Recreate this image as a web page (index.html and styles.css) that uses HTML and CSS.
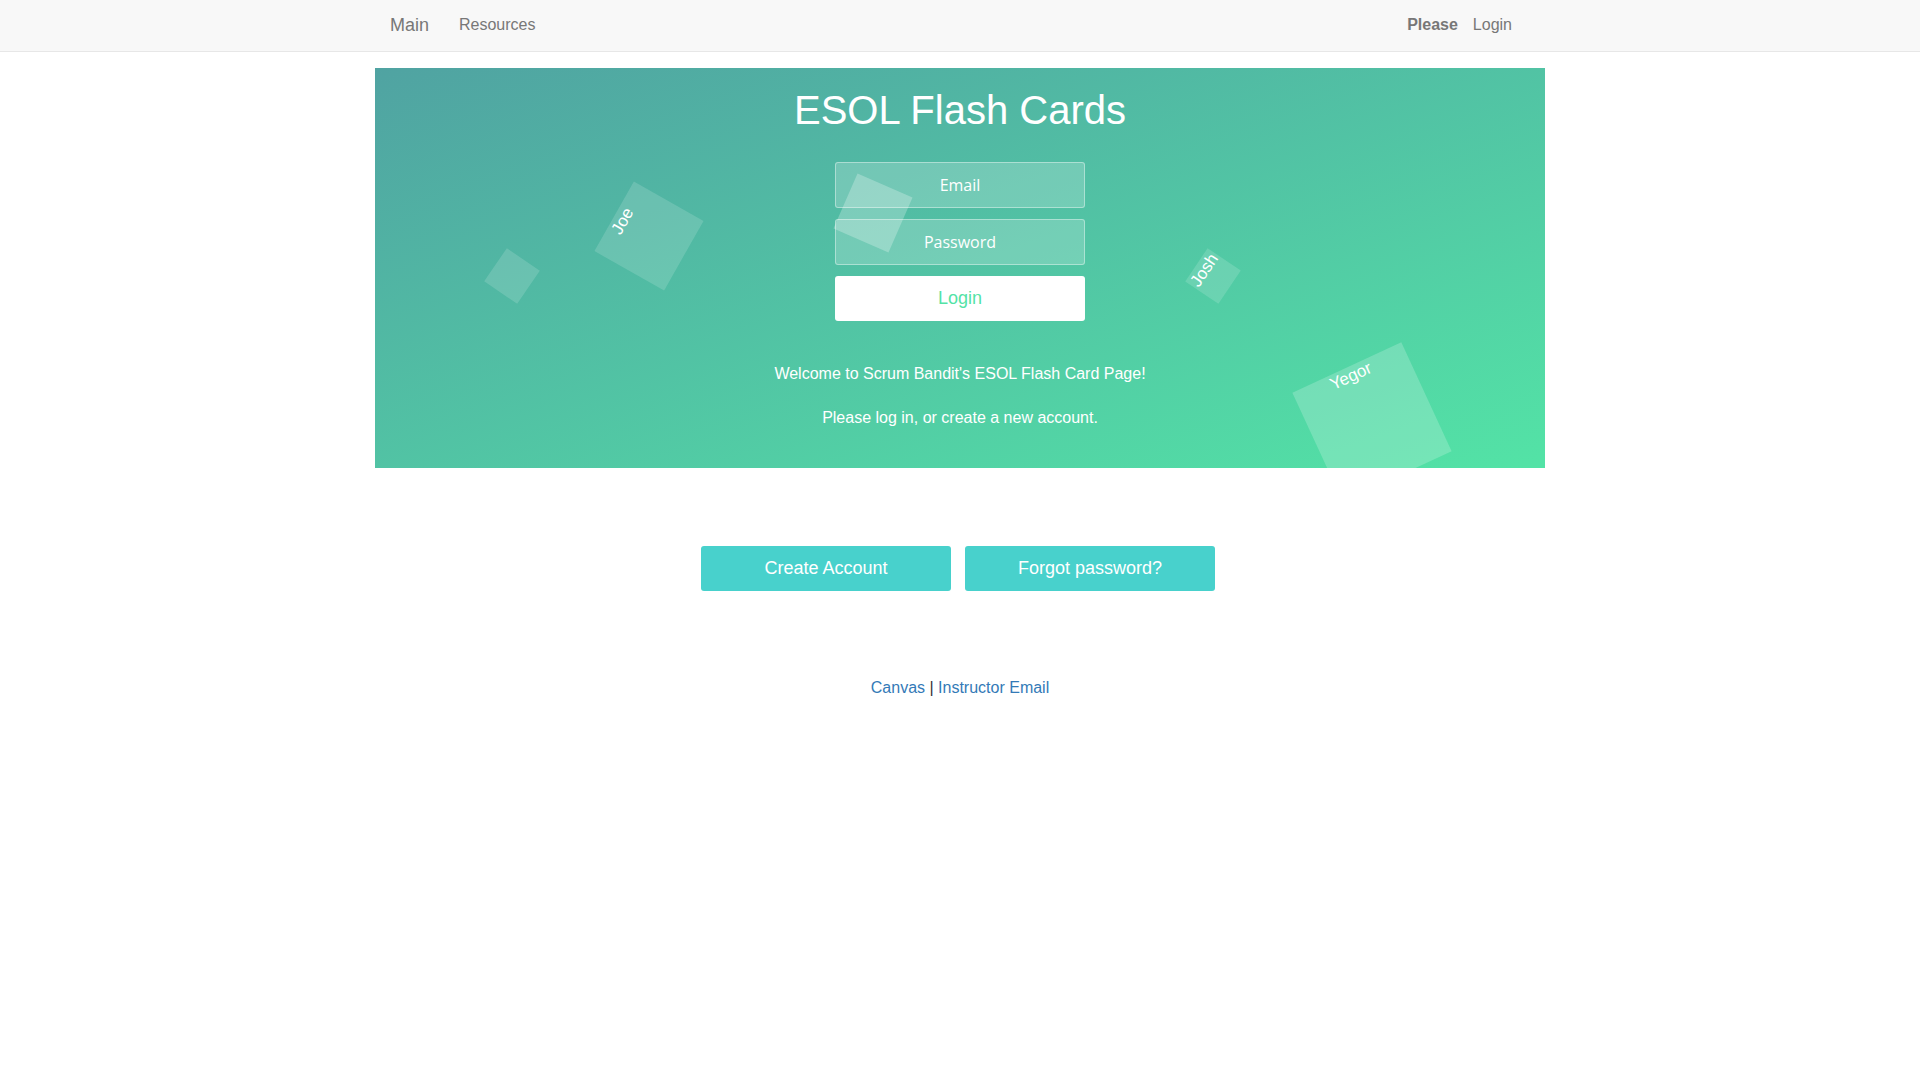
FILE: index.html
```html
<!DOCTYPE html>
<html lang="en">
<head>
<meta charset="utf-8">
<title>ESOL Flash Cards</title>
<link rel="stylesheet" href="styles.css">
</head>
<body>
<nav class="navbar">
  <div class="nav-inner">
    <div class="nav-left">
      <a class="brand" href="#">Main</a>
      <a class="nav-link" href="#">Resources</a>
    </div>
    <div class="nav-right">
      <span class="nav-text">Please</span>
      <a class="nav-link" href="#">Login</a>
    </div>
  </div>
</nav>

<section class="hero">
  <h1 class="hero-title">ESOL Flash Cards</h1>
  <form class="login-form">
    <input class="field" type="text" placeholder="Email">
    <input class="field" type="password" placeholder="Password">
    <button class="login-btn" type="button">Login</button>
  </form>
  <div class="hero-text">
    <p>Welcome to Scrum Bandit's ESOL Flash Card Page!</p>
    <p>Please log in, or create a new account.</p>
  </div>
  <ul class="bubbles">
    <li class="bubble bubble-1"></li>
    <li class="bubble bubble-2">Joe</li>
    <li class="bubble bubble-3"></li>
    <li class="bubble bubble-4">Josh</li>
    <li class="bubble bubble-5">Yegor</li>
  </ul>
</section>

<div class="actions">
  <button class="action-btn" type="button">Create Account</button>
  <button class="action-btn" type="button">Forgot password?</button>
</div>

<footer class="footer">
  <a href="#">Canvas</a> | <a href="#">Instructor Email</a>
</footer>
</body>
</html>
```

FILE: styles.css
```css
* {
  box-sizing: border-box;
}

body {
  margin: 0;
  font-family: "Liberation Sans", Arial, Helvetica, sans-serif;
  font-size: 16px;
  color: #333;
  background: #fff;
}

/* Navbar */
.navbar {
  height: 52px;
  background: #f8f8f8;
  border-bottom: 1px solid #e7e7e7;
}

.nav-inner {
  width: 1170px;
  margin: 0 auto;
  padding: 0 15px;
  display: flex;
  justify-content: space-between;
}

.nav-left,
.nav-right {
  display: flex;
}

.nav-right {
  margin-right: 3px;
}

.brand {
  margin-left: -15px;
  padding: 15px;
  font-size: 18px;
  line-height: 20px;
  color: #777;
  text-decoration: none;
}

.nav-link {
  padding: 15px;
  font-size: 16px;
  line-height: 20px;
  color: #777;
  text-decoration: none;
}

.nav-text {
  padding: 15px 0;
  font-size: 16px;
  line-height: 20px;
  font-weight: bold;
  color: #777;
}

/* Hero */
.hero {
  position: relative;
  width: 1170px;
  height: 400px;
  margin: 16px auto 0;
  background: linear-gradient(to bottom right, #50a3a2 0%, #53e3a6 100%);
  overflow: hidden;
  text-align: center;
  color: #fff;
}

.hero-title {
  margin: 20px 0 0;
  font-size: 40px;
  line-height: 44px;
  font-weight: normal;
}

.login-form {
  margin-top: 30px;
  display: flex;
  flex-direction: column;
  align-items: center;
}

.field {
  display: block;
  width: 250px;
  height: 46px;
  margin: 0 0 11px;
  padding: 0 15px;
  border: 1px solid rgba(255, 255, 255, 0.4);
  border-radius: 3px;
  background: rgba(255, 255, 255, 0.2);
  color: #fff;
  text-align: center;
  font-family: "Open Sans", "Noto Sans", sans-serif;
  font-weight: 400;
  font-size: 16px;
  outline: 0;
}

.field::placeholder {
  color: #fff;
  opacity: 1;
}

.login-btn {
  width: 250px;
  height: 45px;
  border: 0;
  border-radius: 3px;
  background: #fff;
  color: #53e3a6;
  font-family: "Liberation Sans", Arial, sans-serif;
  font-size: 18px;
  cursor: pointer;
}

.hero-text {
  margin-top: 42px;
}

.hero-text p {
  margin: 0 0 22px;
  line-height: 22px;
}

/* Floating squares */
.bubbles {
  margin: 0;
  padding: 0;
  list-style: none;
}

.bubble {
  position: absolute;
  display: block;
  width: 40px;
  height: 40px;
  background: rgba(255, 255, 255, 0.15);
  color: #fff;
  font-size: 17px;
  line-height: 20px;
  text-align: center;
  white-space: nowrap;
  pointer-events: none;
}

.bubble-1 {
  left: 117px;
  top: 188px;
  transform: rotate(-55.5deg);
}

.bubble-2 {
  left: 234px;
  top: 128px;
  width: 80px;
  height: 80px;
  transform: rotate(-60.5deg);
}

.bubble-3 {
  left: 468px;
  top: 115px;
  width: 60px;
  height: 60px;
  background: rgba(255, 255, 255, 0.25);
  transform: rotate(-66.4deg);
}

.bubble-4 {
  left: 818px;
  top: 188px;
  transform: rotate(-56deg);
}

.bubble-5 {
  left: 937px;
  top: 294px;
  width: 120px;
  height: 120px;
  background: rgba(255, 255, 255, 0.2);
  transform: rotate(-24.8deg);
}

/* Action buttons */
.actions {
  margin-top: 78px;
  padding-right: 4px;
  display: flex;
  justify-content: center;
  gap: 14px;
}

.action-btn {
  width: 250px;
  height: 45px;
  border: 0;
  border-radius: 3px;
  background: #48d1cc;
  color: #fff;
  font-family: "Liberation Sans", Arial, sans-serif;
  font-size: 18px;
  cursor: pointer;
}

/* Footer */
.footer {
  margin-top: 86px;
  text-align: center;
  line-height: 22px;
  color: #333;
}

.footer a {
  color: #337ab7;
  text-decoration: none;
}
```
